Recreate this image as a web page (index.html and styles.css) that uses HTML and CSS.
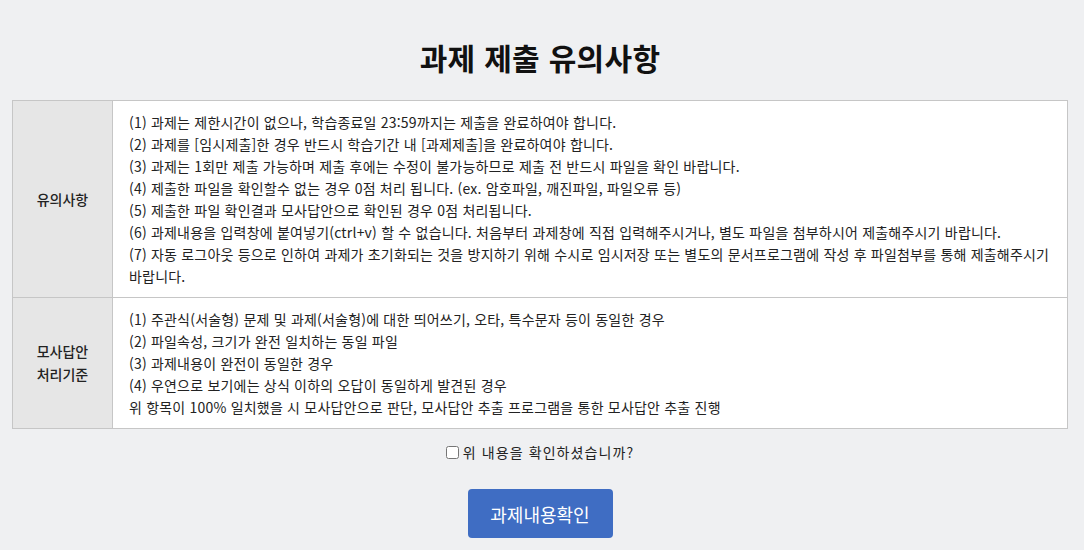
FILE: index.html
```html
<!DOCTYPE html>
<html lang="ko">
<head>
<meta charset="utf-8">
<link rel="stylesheet" href="styles.css">
</head>
<body>
<div class="page">
  <h1 class="title">과제 제출 유의사항</h1>
  <table class="notice">
    <tr>
      <th>유의사항</th>
      <td>
        <p>(1) 과제는 제한시간이 없으나, 학습종료일 23:59까지는 제출을 완료하여야 합니다.</p>
        <p>(2) 과제를 [임시제출]한 경우 반드시 학습기간 내 [과제제출]을 완료하여야 합니다.</p>
        <p>(3) 과제는 1회만 제출 가능하며 제출 후에는 수정이 불가능하므로 제출 전 반드시 파일을 확인 바랍니다.</p>
        <p>(4) 제출한 파일을 확인할수 없는 경우 0점 처리 됩니다. (ex. 암호파일, 깨진파일, 파일오류 등)</p>
        <p>(5) 제출한 파일 확인결과 모사답안으로 확인된 경우 0점 처리됩니다.</p>
        <p>(6) 과제내용을 입력창에 붙여넣기(ctrl+v) 할 수 없습니다. 처음부터 과제창에 직접 입력해주시거나, 별도 파일을 첨부하시어 제출해주시기 바랍니다.</p>
        <p>(7) 자동 로그아웃 등으로 인하여 과제가 초기화되는 것을 방지하기 위해 수시로 임시저장 또는 별도의 문서프로그램에 작성 후 파일첨부를 통해 제출해주시기 바랍니다.</p>
      </td>
    </tr>
    <tr>
      <th>모사답안<br>처리기준</th>
      <td>
        <p>(1) 주관식(서술형) 문제 및 과제(서술형)에 대한 띄어쓰기, 오타, 특수문자 등이 동일한 경우</p>
        <p>(2) 파일속성, 크기가 완전 일치하는 동일 파일</p>
        <p>(3) 과제내용이 완전이 동일한 경우</p>
        <p>(4) 우연으로 보기에는 상식 이하의 오답이 동일하게 발견된 경우</p>
        <p>위 항목이 100% 일치했을 시 모사답안으로 판단, 모사답안 추출 프로그램을 통한 모사답안 추출 진행</p>
      </td>
    </tr>
  </table>
  <label class="confirm"><input type="checkbox" class="check">위 내용을 확인하셨습니까?</label>
  <div class="actions"><button class="btn" type="button">과제내용확인</button></div>
</div>
</body>
</html>
```
FILE: styles.css
```css
html, body {
  margin: 0;
  padding: 0;
  background: #eff0f2;
}
body {
  font-family: "Noto Sans CJK KR", "Noto Sans", sans-serif;
  color: #222;
}
.page {
  padding: 0 16px 12px 12px;
  display: flex;
  flex-direction: column;
  align-items: center;
}
.title {
  margin: 37px 0 22px 0;
  font-size: 30px;
  line-height: 41px;
  font-weight: 700;
  color: #111;
  letter-spacing: 0.3px;
}
.notice {
  width: 100%;
  border-collapse: collapse;
  background: #fff;
  border: 1px solid #c6c6c6;
}
.notice th {
  width: 99px;
  background: #e6e6e6;
  border: 1px solid #c6c6c6;
  font-size: 14px;
  font-weight: 500;
  line-height: 23px;
  color: #222;
  text-align: center;
  vertical-align: middle;
  padding: 0;
}
.notice td {
  border: 1px solid #c6c6c6;
  padding: 10px 15px 10px 16px;
  font-size: 14px;
  letter-spacing: 0.2px;
  line-height: 22px;
  color: #222;
  vertical-align: top;
}
.notice p {
  margin: 0;
}
.confirm {
  display: flex;
  align-items: center;
  margin-top: 13px;
  font-size: 14px;
  letter-spacing: 1.1px;
  line-height: 20px;
  color: #222;
}
.check {
  width: 13px;
  height: 13px;
  margin: 0 4px 0 0;
}
.actions {
  margin-top: 27px;
}
.btn {
  width: 145px;
  height: 49px;
  border: none;
  border-radius: 4px;
  background: #3f6dc3;
  color: #fff;
  font-family: "Noto Sans CJK KR", "Noto Sans", sans-serif;
  font-size: 18px;
}
```
